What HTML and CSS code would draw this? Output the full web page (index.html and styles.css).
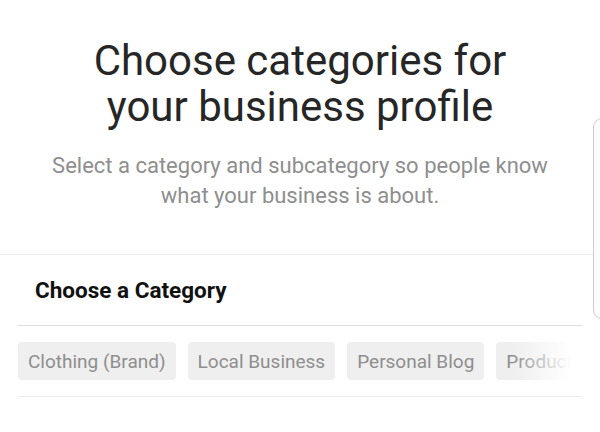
FILE: index.html
```html
<!DOCTYPE html>
<html lang="en">
<head>
<meta charset="utf-8">
<title>Choose categories</title>
<link rel="stylesheet" href="styles.css">
</head>
<body>
<main class="page">
  <header class="intro">
    <h1 class="title">Choose categories for<br>your business profile</h1>
    <p class="subtitle">Select a category and subcategory so people know<br>what your business is about.</p>
  </header>
  <section class="picker">
    <div class="picker-inner">
      <h2 class="picker-head">Choose a Category</h2>
      <div class="chips-wrap">
        <div class="chips">
          <span class="chip">Clothing (Brand)</span>
          <span class="chip">Local Business</span>
          <span class="chip">Personal Blog</span>
          <span class="chip">Product/Service</span>
        </div>
        <div class="fade"></div>
      </div>
    </div>
  </section>
  <div class="edge-handle"></div>
</main>
</body>
</html>
```
FILE: styles.css
```css
html, body {
  margin: 0;
  padding: 0;
  background: #ffffff;
}
body {
  font-family: Roboto, "Liberation Sans", Arial, sans-serif;
  width: 600px;
  height: 432px;
  overflow: hidden;
}
.page {
  position: relative;
  width: 600px;
  height: 432px;
}
.intro {
  padding-top: 38px;
  text-align: center;
}
.title {
  margin: 0;
  font-size: 42px;
  line-height: 46px;
  font-weight: 400;
  color: #262626;
}
.subtitle {
  margin: 21px 0 0;
  font-size: 22px;
  line-height: 30px;
  color: #8e8e8e;
}
.picker {
  margin-top: 43px;
  border-top: 1px solid #ececec;
}
.picker-inner {
  margin: 0 18px;
}
.picker-head {
  margin: 0;
  height: 70px;
  display: flex;
  align-items: center;
  padding-left: 17px;
  font-size: 22.5px;
  font-weight: 700;
  color: #111111;
  border-bottom: 1px solid #dedede;
}
.chips-wrap {
  position: relative;
  height: 70px;
  border-bottom: 1px solid #ececec;
  overflow: hidden;
}
.chips {
  display: flex;
  align-items: center;
  gap: 12px;
  height: 100%;
  white-space: nowrap;
}
.chip {
  flex: none;
  display: flex;
  align-items: center;
  height: 38px;
  padding: 0 10px;
  border-radius: 4px;
  background: #efefef;
  color: #8e8e8e;
  font-size: 19px;
}
.fade {
  position: absolute;
  top: 0;
  right: 0;
  width: 70px;
  height: 100%;
  background: linear-gradient(to right, rgba(255,255,255,0), #ffffff 85%);
}
.edge-handle {
  position: absolute;
  left: 593px;
  top: 118px;
  width: 20px;
  height: 199px;
  border: 1px solid #cfcfcf;
  border-radius: 9px;
  background: #fdfdfd;
}
```
